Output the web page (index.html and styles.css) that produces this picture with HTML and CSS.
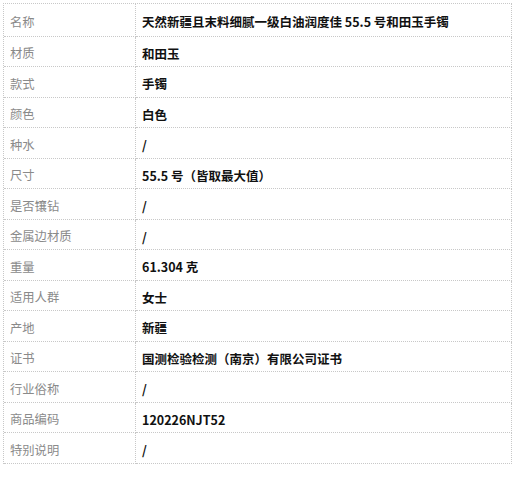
FILE: index.html
```html
<!DOCTYPE html>
<html lang="zh">
<head>
<meta charset="utf-8">
<link rel="stylesheet" href="styles.css">
</head>
<body>
<div class="spec">
  <div class="row first"><div class="label">名称</div><div class="value">天然新疆且末料细腻一级白油润度佳 55.5 号和田玉手镯</div></div>
  <div class="row"><div class="label">材质</div><div class="value">和田玉</div></div>
  <div class="row"><div class="label">款式</div><div class="value">手镯</div></div>
  <div class="row"><div class="label">颜色</div><div class="value">白色</div></div>
  <div class="row"><div class="label">种水</div><div class="value">/</div></div>
  <div class="row"><div class="label">尺寸</div><div class="value">55.5 号（皆取最大值）</div></div>
  <div class="row"><div class="label">是否镶钻</div><div class="value">/</div></div>
  <div class="row"><div class="label">金属边材质</div><div class="value">/</div></div>
  <div class="row"><div class="label">重量</div><div class="value">61.304 克</div></div>
  <div class="row"><div class="label">适用人群</div><div class="value">女士</div></div>
  <div class="row"><div class="label">产地</div><div class="value">新疆</div></div>
  <div class="row"><div class="label">证书</div><div class="value">国测检验检测（南京）有限公司证书</div></div>
  <div class="row"><div class="label">行业俗称</div><div class="value">/</div></div>
  <div class="row"><div class="label">商品编码</div><div class="value">120226NJT52</div></div>
  <div class="row"><div class="label">特别说明</div><div class="value">/</div></div>
</div>
</body>
</html>
```

FILE: styles.css
```css
html, body {
  margin: 0;
  padding: 0;
  background: #fff;
}
body {
  padding: 3px 0 0 3px;
  font-family: "Noto Sans CJK SC", "Noto Sans", sans-serif;
  font-size: 12px;
}
.spec {
  width: 508px;
  border-top: 1px dotted #c8c8c8;
  border-left: 1px dotted #c8c8c8;
}
.row {
  display: grid;
  grid-template-columns: 132px 1fr;
  height: 30px;
}
.row:nth-child(odd) {
  height: 31px;
}
.row.first {
  height: 33px;
}
.label, .value {
  display: flex;
  align-items: center;
  padding-top: 3px;
  box-sizing: border-box;
  border-right: 1px dotted #c8c8c8;
  border-bottom: 1px dotted #c8c8c8;
}
.label {
  padding-left: 6px;
  color: #8a8a8a;
  font-size: 12.3px;
}
.value {
  padding-left: 6px;
  color: #111;
  font-weight: bold;
  font-size: 12.5px;
}
```
